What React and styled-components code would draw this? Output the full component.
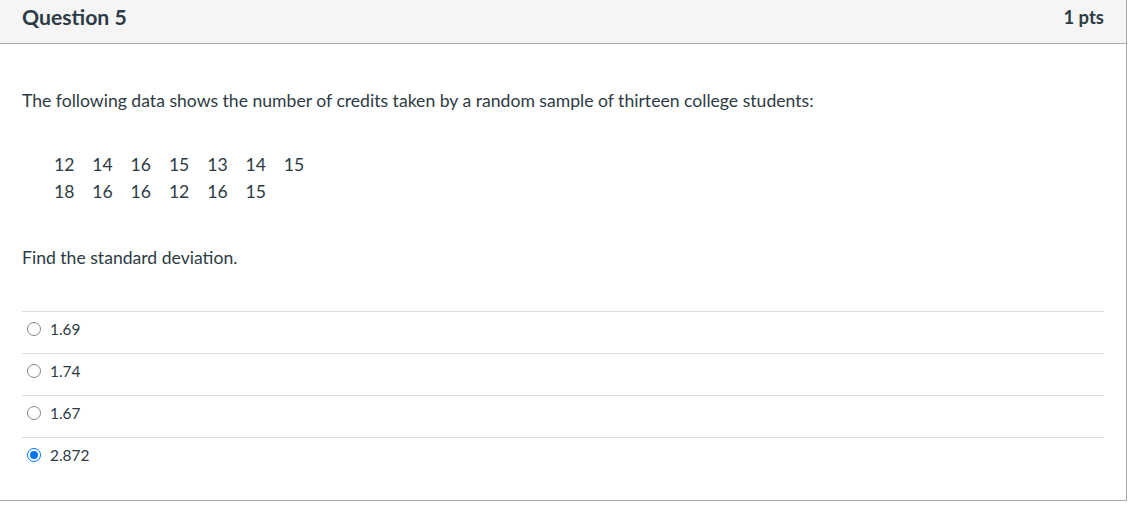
import styled, { createGlobalStyle } from 'styled-components';

const GlobalStyle = createGlobalStyle`
    html, body {
        margin: 0;
        padding: 0;
        background: #ffffff;
    }
    body {
        font-family: 'Lato', 'Noto Sans', sans-serif;
        color: #2d3b45;
    }
`;

const data = [
    [12, 14, 16, 15, 13, 14, 15],
    [18, 16, 16, 12, 16, 15],
];

const answers = [
    { id: 'a1', label: '1.69', checked: false },
    { id: 'a2', label: '1.74', checked: false },
    { id: 'a3', label: '1.67', checked: false },
    { id: 'a4', label: '2.872', checked: true },
];

function App() {
    return (
        <>
            <GlobalStyle />
            <QuestionCard>
                <HeaderStyled>
                    <TitleStyled>Question 5</TitleStyled>
                    <PointsStyled>1 pts</PointsStyled>
                </HeaderStyled>
                <BodyStyled>
                    <ParagraphStyled>
                        The following data shows the number of credits taken by a random sample of thirteen college students:
                    </ParagraphStyled>
                    <DataTable>
                        {data.map((row, r) => (
                            <DataRow key={r}>
                                {row.map((n, i) => (
                                    <DataCell key={i}>{n}</DataCell>
                                ))}
                            </DataRow>
                        ))}
                    </DataTable>
                    <PromptStyled>Find the standard deviation.</PromptStyled>
                    <AnswerList>
                        {answers.map((a) => (
                            <AnswerRow key={a.id}>
                                <Radio $checked={a.checked} />
                                <AnswerLabel>{a.label}</AnswerLabel>
                            </AnswerRow>
                        ))}
                    </AnswerList>
                </BodyStyled>
            </QuestionCard>
        </>
    );
}

export default App;

const QuestionCard = styled.section`
    width: 1126px;
    border: 1px solid #a9a9a9;
    border-left: none;
    border-top: none;
    background-color: #ffffff;
`;

const HeaderStyled = styled.header`
    display: flex;
    justify-content: space-between;
    align-items: flex-start;
    height: 44px;
    box-sizing: border-box;
    padding: 5px 22px 0 22px;
    background-color: #f5f5f5;
    border-bottom: 1px solid #a9a9a9;
`;

const TitleStyled = styled.h2`
    margin: 0;
    font-size: 21.2px;
    line-height: 24px;
    font-weight: 700;
`;

const PointsStyled = styled.div`
    font-size: 18.5px;
    line-height: 24px;
    font-weight: 700;
`;

const BodyStyled = styled.div`
    padding: 44px 22px 21px 22px;
`;

const ParagraphStyled = styled.p`
    margin: 0;
    font-size: 17.6px;
    line-height: 26px;
`;

const DataTable = styled.div`
    margin: 37px 0 0 32px;
    font-size: 17.6px;
    line-height: 27px;
`;

const DataRow = styled.div`
    display: flex;
`;

const DataCell = styled.span`
    width: 38.3px;
`;

const PromptStyled = styled.p`
    margin: 40px 0 0 0;
    font-size: 17.6px;
    line-height: 26px;
`;

const AnswerList = styled.div`
    margin-top: 40px;
`;

const AnswerRow = styled.label`
    display: flex;
    align-items: center;
    height: 42px;
    box-sizing: border-box;
    padding: 0 0 8px 5px;
    border-top: 1px solid #dcdcdc;
`;

const Radio = styled.span`
    position: relative;
    width: 14px;
    height: 14px;
    box-sizing: border-box;
    border-radius: 50%;
    border: 1.2px solid ${(p) => (p.$checked ? '#0075ff' : '#858585')};
    background: #ffffff;
    flex-shrink: 0;

    &::after {
        content: '';
        display: ${(p) => (p.$checked ? 'block' : 'none')};
        position: absolute;
        inset: 2px;
        border-radius: 50%;
        background: #0075ff;
    }
`;

const AnswerLabel = styled.span`
    margin-left: 9px;
    font-size: 15.4px;
    line-height: 22px;
`;
